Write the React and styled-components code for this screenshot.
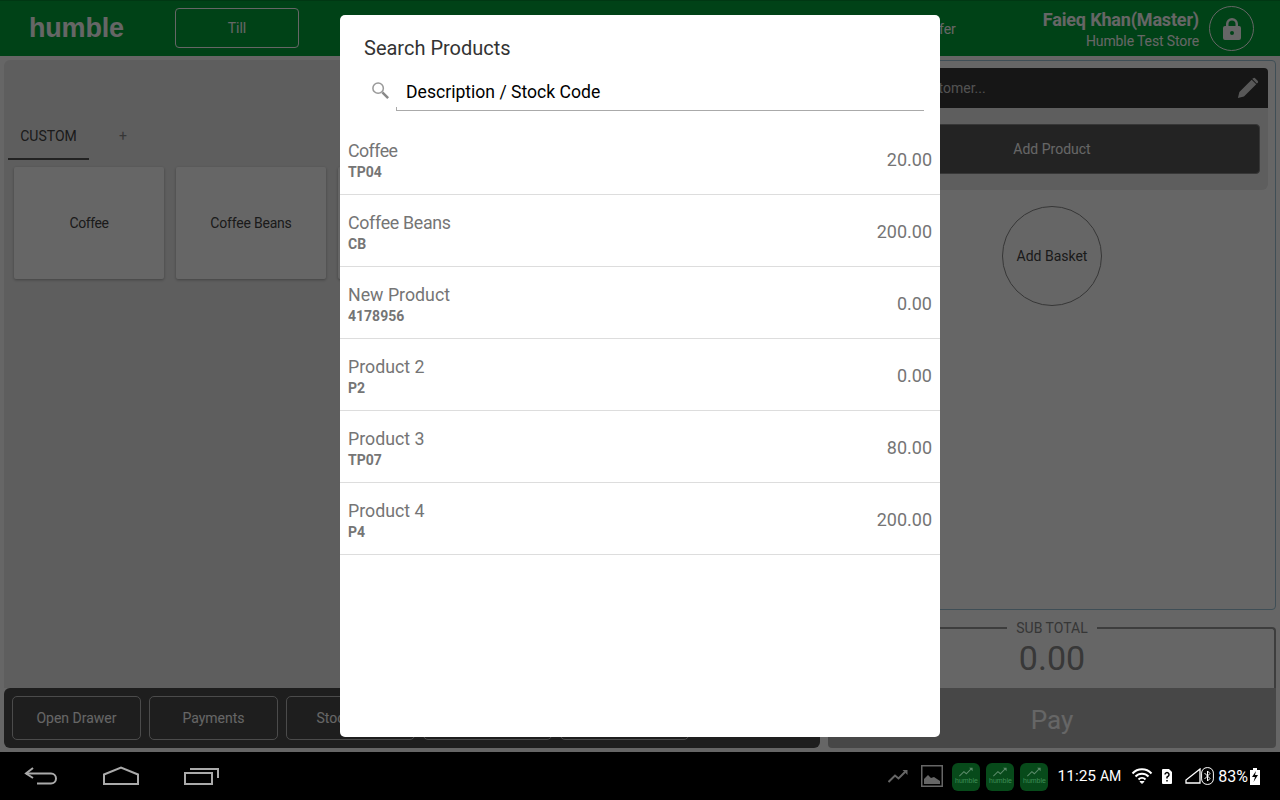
import React from 'react'
import styled, { createGlobalStyle } from 'styled-components'

const Global = createGlobalStyle`
  html, body { margin: 0; padding: 0; background: #000; }
  * { box-sizing: border-box; }
  body { font-family: Roboto, "Liberation Sans", sans-serif; }
`

const Screen = styled.div`
  width: 1280px;
  height: 800px;
  display: flex;
  flex-direction: column;
  overflow: hidden;
`
const AppArea = styled.div`
  position: relative;
  height: 752px;
  display: flex;
  flex-direction: column;
  background: #fff;
`
const Header = styled.header`
  height: 56px;
  flex: none;
  display: flex;
  align-items: center;
  background: #00a53a;
  border-top: 1px solid #008a30;
  padding: 0 26px 0 29px;
`
const Logo = styled.div`
  width: 146px;
  font: bold 27px "Liberation Sans", sans-serif;
  color: #fff;
  letter-spacing: -0.2px;
`
const TillButton = styled.div`
  width: 124px;
  height: 40px;
  margin-top: -1px;
  display: flex;
  align-items: center;
  justify-content: center;
  border: 1px solid #fff;
  border-radius: 4px;
  font-size: 14px;
  color: #fff;
`
const HeaderLink = styled.div`
  margin-left: auto;
  margin-right: 87px;
  font-size: 14px;
  color: #fff;
`
const UserBlock = styled.div`
  text-align: right;
  color: #fff;
  margin-right: 10px;
  padding-top: 2px;
`
const UserName = styled.div`
  font-size: 18px;
  font-weight: 700;
  line-height: 24px;
  margin-top: -2px;
  letter-spacing: -0.17px;
`
const StoreName = styled.div`
  font-size: 14px;
  line-height: 18px;
  letter-spacing: -0.12px;
`
const LockCircle = styled.div`
  width: 45px;
  height: 45px;
  border: 1px solid #fff;
  border-radius: 50%;
  display: flex;
  align-items: center;
  justify-content: center;
`
const Body = styled.div`
  flex: 1;
  display: grid;
  grid-template-columns: 816px 448px;
  column-gap: 8px;
  padding: 4px;
  min-height: 0;
`
const LeftColumn = styled.div`
  display: flex;
  flex-direction: column;
`
const ProductPanel = styled.div`
  flex: 1;
  background: #ebebeb;
  border-radius: 6px 6px 0 0;
  padding: 56px 4px 0;
`
const Tabs = styled.div`
  display: flex;
  height: 44px;
`
const Tab = styled.div`
  width: 81px;
  display: flex;
  align-items: center;
  justify-content: center;
  padding-bottom: 2px;
  font-size: 14px;
  color: #444;
  border-bottom: 2px solid ${p => (p.$active ? '#555' : 'transparent')};
`
const AddTab = styled(Tab)`
  width: 68px;
  color: #888;
`
const Tiles = styled.div`
  display: flex;
  gap: 12px;
  padding: 7px 0 0 6px;
`
const Tile = styled.div`
  width: 150px;
  height: 112px;
  display: flex;
  align-items: center;
  justify-content: center;
  background: #fff;
  border-radius: 2px;
  box-shadow: 0 1px 3px rgba(0, 0, 0, 0.3);
  font-size: 14px;
  letter-spacing: ${p => p.$tight || 0}px;
  color: #444;
`
const ActionBar = styled.div`
  height: 60px;
  flex: none;
  display: flex;
  gap: 8px;
  padding: 8px;
  background: #4b4b4b;
  border-radius: 6px;
`
const ActionButton = styled.div`
  width: 129px;
  height: 44px;
  display: flex;
  align-items: center;
  justify-content: center;
  border: 1px solid #bbb;
  border-radius: 5px;
  font-size: 14px;
  color: #fff;
`
const RightColumn = styled.div`
  display: flex;
  flex-direction: column;
`
const BasketPanel = styled.div`
  height: 550px;
  flex: none;
  border: 1px solid #9dc4d6;
  border-radius: 4px;
  padding: 7px 7px 0;
`
const CustomerBar = styled.div`
  height: 40px;
  display: flex;
  align-items: center;
  justify-content: space-between;
  background: #383838;
  border-radius: 4px 4px 0 0;
  padding: 0 9px 0 32px;
  font-size: 14px;
  color: #ccc;
`
const ProductBox = styled.div`
  height: 82px;
  padding: 16px 8px 0;
  background: #ebebeb;
  border-radius: 0 0 6px 6px;
`
const AddProduct = styled.div`
  height: 50px;
  display: flex;
  align-items: center;
  justify-content: center;
  background: #585858;
  border: 1px solid #8a8a8a;
  border-radius: 4px;
  font-size: 14px;
  color: #fff;
`
const AddBasket = styled.div`
  width: 100px;
  height: 100px;
  margin: 16px auto 0;
  display: flex;
  align-items: center;
  justify-content: center;
  border: 1px solid #888;
  border-radius: 50%;
  font-size: 14px;
  color: #444;
`
const TotalBox = styled.fieldset`
  flex: 1;
  margin: 10px 0 0;
  padding: 0;
  min-width: 0;
  border: 2px solid #9a9a9a;
  border-bottom: 0;
  border-radius: 4px 4px 0 0;
  text-align: center;
`
const TotalLegend = styled.legend`
  margin: 0 auto;
  padding: 0 9px;
  font-size: 14px;
  line-height: 16px;
  color: #888;
`
const TotalValue = styled.div`
  font-size: 34px;
  line-height: 42px;
  margin-top: 1px;
  color: #8c8c8c;
`
const PayButton = styled.div`
  height: 60px;
  flex: none;
  display: flex;
  align-items: center;
  justify-content: center;
  padding-top: 4px;
  background: #b2b2b2;
  border-radius: 0 0 4px 4px;
  font-size: 26px;
  color: #fff;
`
const Scrim = styled.div`
  position: absolute;
  inset: 0;
  background: rgba(0, 0, 0, 0.6);
`
const Modal = styled.div`
  position: absolute;
  left: 340px;
  top: 15px;
  width: 600px;
  height: 722px;
  background: #fff;
  border-radius: 5px;
`
const ModalTitle = styled.div`
  padding: 22px 24px 0;
  font-size: 20px;
  line-height: 22px;
  color: #333;
`
const SearchRow = styled.div`
  display: flex;
  align-items: flex-start;
  margin: 11px 16px 0 30px;
`
const SearchIcon = styled.div`
  width: 26px;
  flex: none;
  padding: 11px 0 0 1px;
`
const SearchField = styled.div`
  flex: 1;
  height: 41px;
  padding: 10px 0 0 10px;
  font-size: 17.6px;
  line-height: 24px;
  color: #000;
  border-bottom: 1px solid #aaa;
  position: relative;
  &::before {
    content: '';
    position: absolute;
    left: 0;
    bottom: 0;
    height: 3px;
    border-left: 1px solid #aaa;
  }
`
const ResultList = styled.div`
  margin-top: 12px;
`
const ResultRow = styled.div`
  height: 72px;
  display: flex;
  justify-content: space-between;
  align-items: center;
  padding: 2px 8px 0;
  border-bottom: 1px solid #ddd;
  color: #757575;
`
const ResultName = styled.div`
  font-size: 17.8px;
  line-height: 24px;
  letter-spacing: ${p => p.$tight || 0}px;
`
const ResultCode = styled.div`
  font-size: 14px;
  font-weight: 700;
  line-height: 18px;
`
const ResultPrice = styled.div`
  font-size: 18px;
`
const StatusBar = styled.div`
  height: 48px;
  flex: none;
  display: flex;
  align-items: center;
  background: #000;
  padding: 0 20px 0 24px;
`
const NavIcons = styled.div`
  display: flex;
  align-items: center;
  gap: 44px;
`
const Tray = styled.div`
  margin-left: auto;
  display: flex;
  align-items: center;
  color: #fff;
`
const AppTile = styled.div`
  width: 28px;
  height: 28px;
  margin: 1px 6px 0 0;
  background: #074a1a;
  border-radius: 6px;
  display: flex;
  flex-direction: column;
  align-items: center;
  font: 7px "Liberation Sans", sans-serif;
  line-height: 8px;
  color: #3f8f57;
  padding-top: 4px;
`
const Clock = styled.div`
  font-size: 15.5px;
  margin: 0 10px 0 3px;
  white-space: nowrap;
`
const ClockSuffix = styled.span`
  font-size: 14px;
`
const Percent = styled.div`
  font-size: 16px;
  margin: 0 2px 0 4px;
`

// tight: the device font sets "ff" narrower than the installed Roboto
const products = [
  { name: 'Coffee', code: 'TP04', price: '20.00', tight: -0.55 },
  { name: 'Coffee Beans', code: 'CB', price: '200.00', tight: -0.3 },
  { name: 'New Product', code: '4178956', price: '0.00' },
  { name: 'Product 2', code: 'P2', price: '0.00' },
  { name: 'Product 3', code: 'TP07', price: '80.00' },
  { name: 'Product 4', code: 'P4', price: '200.00' },
]

const TrendIcon = ({ w = 20, h = 14, color = '#666', sw = 2 }) => (
  <svg width={w} height={h} viewBox="0 0 20 14" fill="none">
    <path d="M0.5 13 L7 6.5 L10.5 9.5 L17 3" stroke={color} strokeWidth={sw} />
    <path d="M14.5 1 H19.5 V6 Z" fill={color} />
  </svg>
)

function App() {
  return (
    <Screen>
      <Global />
      <AppArea>
        <Header>
          <Logo>humble</Logo>
          <TillButton>Till</TillButton>
          <HeaderLink>Transfer</HeaderLink>
          <UserBlock>
            <UserName>Faieq Khan(Master)</UserName>
            <StoreName>Humble Test Store</StoreName>
          </UserBlock>
          <LockCircle>
            <svg width="18" height="22" viewBox="0 0 18 22">
              <path fillRule="evenodd" fill="#fff" d="M3 8V6a6 6 0 0 1 12 0v2h1a2 2 0 0 1 2 2v10a2 2 0 0 1-2 2H2a2 2 0 0 1-2-2V10a2 2 0 0 1 2-2h1zm2.5 0h7V6a3.5 3.5 0 0 0-7 0v2zM9 13a2 2 0 1 0 0 4 2 2 0 0 0 0-4z" />
            </svg>
          </LockCircle>
        </Header>
        <Body>
          <LeftColumn>
            <ProductPanel>
              <Tabs>
                <Tab $active>CUSTOM</Tab>
                <AddTab>+</AddTab>
              </Tabs>
              <Tiles>
                <Tile $tight={-0.4}>Coffee</Tile>
                <Tile $tight={-0.2}>Coffee Beans</Tile>
                <Tile />
              </Tiles>
            </ProductPanel>
            <ActionBar>
              <ActionButton>Open Drawer</ActionButton>
              <ActionButton>Payments</ActionButton>
              <ActionButton>Stock Take</ActionButton>
              <ActionButton />
              <ActionButton />
            </ActionBar>
          </LeftColumn>
          <RightColumn>
            <BasketPanel>
              <CustomerBar>
                <span>Search Customer...</span>
                <svg width="22" height="22" viewBox="0 0 24 24" fill="#ddd">
                  <path d="M1 23l1.6-6.6L16 3l5 5L7.6 21.4 1 23zM17.5 1.5a1.8 1.8 0 0 1 2.5 0l2.5 2.5a1.8 1.8 0 0 1 0 2.5L21.5 7l-5-5 1-.5z" />
                </svg>
              </CustomerBar>
              <ProductBox>
                <AddProduct>Add Product</AddProduct>
              </ProductBox>
              <AddBasket>Add Basket</AddBasket>
            </BasketPanel>
            <TotalBox>
              <TotalLegend>SUB TOTAL</TotalLegend>
              <TotalValue>0.00</TotalValue>
            </TotalBox>
            <PayButton>Pay</PayButton>
          </RightColumn>
        </Body>
        <Scrim>
          <Modal>
            <ModalTitle>Search Products</ModalTitle>
            <SearchRow>
              <SearchIcon>
                <svg width="19" height="19" viewBox="0 0 20 20" fill="none">
                  <circle cx="7.5" cy="7.5" r="5.5" stroke="#999" strokeWidth="1.6" />
                  <path d="M12 12l6 6" stroke="#888" strokeWidth="2.6" />
                </svg>
              </SearchIcon>
              <SearchField>Description / Stock Code</SearchField>
            </SearchRow>
            <ResultList>
              {products.map(p => (
                <ResultRow key={p.name}>
                  <div>
                    <ResultName $tight={p.tight}>{p.name}</ResultName>
                    <ResultCode>{p.code}</ResultCode>
                  </div>
                  <ResultPrice>{p.price}</ResultPrice>
                </ResultRow>
              ))}
            </ResultList>
          </Modal>
        </Scrim>
      </AppArea>
      <StatusBar>
        <NavIcons>
          <svg width="34" height="20" viewBox="0 0 34 20" fill="none" stroke="#aaa" strokeWidth="2">
            <path d="M9 2 L2 7.5 L9 12" />
            <path d="M2 7.5 H27 a5 5 0 0 1 0 10 H13" />
          </svg>
          <svg width="38" height="20" viewBox="0 0 38 20" fill="none" stroke="#aaa" strokeWidth="2">
            <path d="M2 8.5 L19 1.5 L36 8.5 V18 H2 Z" />
          </svg>
          <svg width="36" height="18" viewBox="0 0 36 18" fill="none" stroke="#aaa" strokeWidth="2">
            <rect x="1" y="6" width="27" height="11" />
            <path d="M6 2 H34 V11" />
          </svg>
        </NavIcons>
        <Tray>
          <TrendIcon />
          <svg width="22" height="22" viewBox="0 0 22 22" style={{ margin: '0 9px 0 13px' }}>
            <rect x="0.75" y="0.75" width="20.5" height="20.5" fill="none" stroke="#666" strokeWidth="1.5" />
            <path d="M3 19v-5l4-4 3 3 3-1 6 4v3z" fill="#666" />
          </svg>
          {[0, 1, 2].map(i => (
            <AppTile key={i}>
              <TrendIcon w={14} h={10} color="#5c8a6a" sw={1.5} />
              <span>humble</span>
            </AppTile>
          ))}
          <Clock>11:25 <ClockSuffix>AM</ClockSuffix></Clock>
          <svg width="22" height="17" viewBox="0 0 22 17" fill="none" stroke="#fff">
            <path d="M1.5 5.5 a13 13 0 0 1 19 0" strokeWidth="2" />
            <path d="M4.5 8.5 a9 9 0 0 1 13 0" strokeWidth="2" />
            <path d="M7.5 11.5 a5 5 0 0 1 7 0" strokeWidth="2" />
            <path d="M9 13.5 L11 15.5 L13 13.5 Z" fill="#fff" />
          </svg>
          <svg width="10" height="15" viewBox="0 0 10 15" style={{ margin: '0 13px 0 9px' }}>
            <path d="M0 1 a1 1 0 0 1 1-1 H7 L10 3 V14 a1 1 0 0 1-1 1 H1 a1 1 0 0 1-1-1 Z" fill="#fff" />
            <path d="M3 5.5 a2 2 0 1 1 3 1.8 L5 8.2 V9.5 M5 11 V12.5" fill="none" stroke="#000" strokeWidth="1.5" />
          </svg>
          <svg width="16" height="16" viewBox="0 0 16 16" fill="none" stroke="#fff" strokeWidth="1.3">
            <path d="M15 1 V15 H1 V12 Z" />
          </svg>
          <svg width="13" height="18" viewBox="0 0 13 18" fill="none" stroke="#fff">
            <rect x="0.6" y="0.6" width="11.8" height="16.8" rx="5.5" strokeWidth="1" />
            <path d="M3.5 6 L9 11.5 L6.5 14 V4 L9 6.5 L3.5 12" strokeWidth="1" />
          </svg>
          <Percent>83%</Percent>
          <svg width="10" height="17" viewBox="0 0 10 17">
            <path d="M3 0 H7 V2 H10 V17 H0 V2 H3 Z" fill="#fff" />
            <path d="M6 3 L2 9 H5 L3.5 14 L8 7 H5 Z" fill="#000" />
          </svg>
        </Tray>
      </StatusBar>
    </Screen>
  )
}

export default App
